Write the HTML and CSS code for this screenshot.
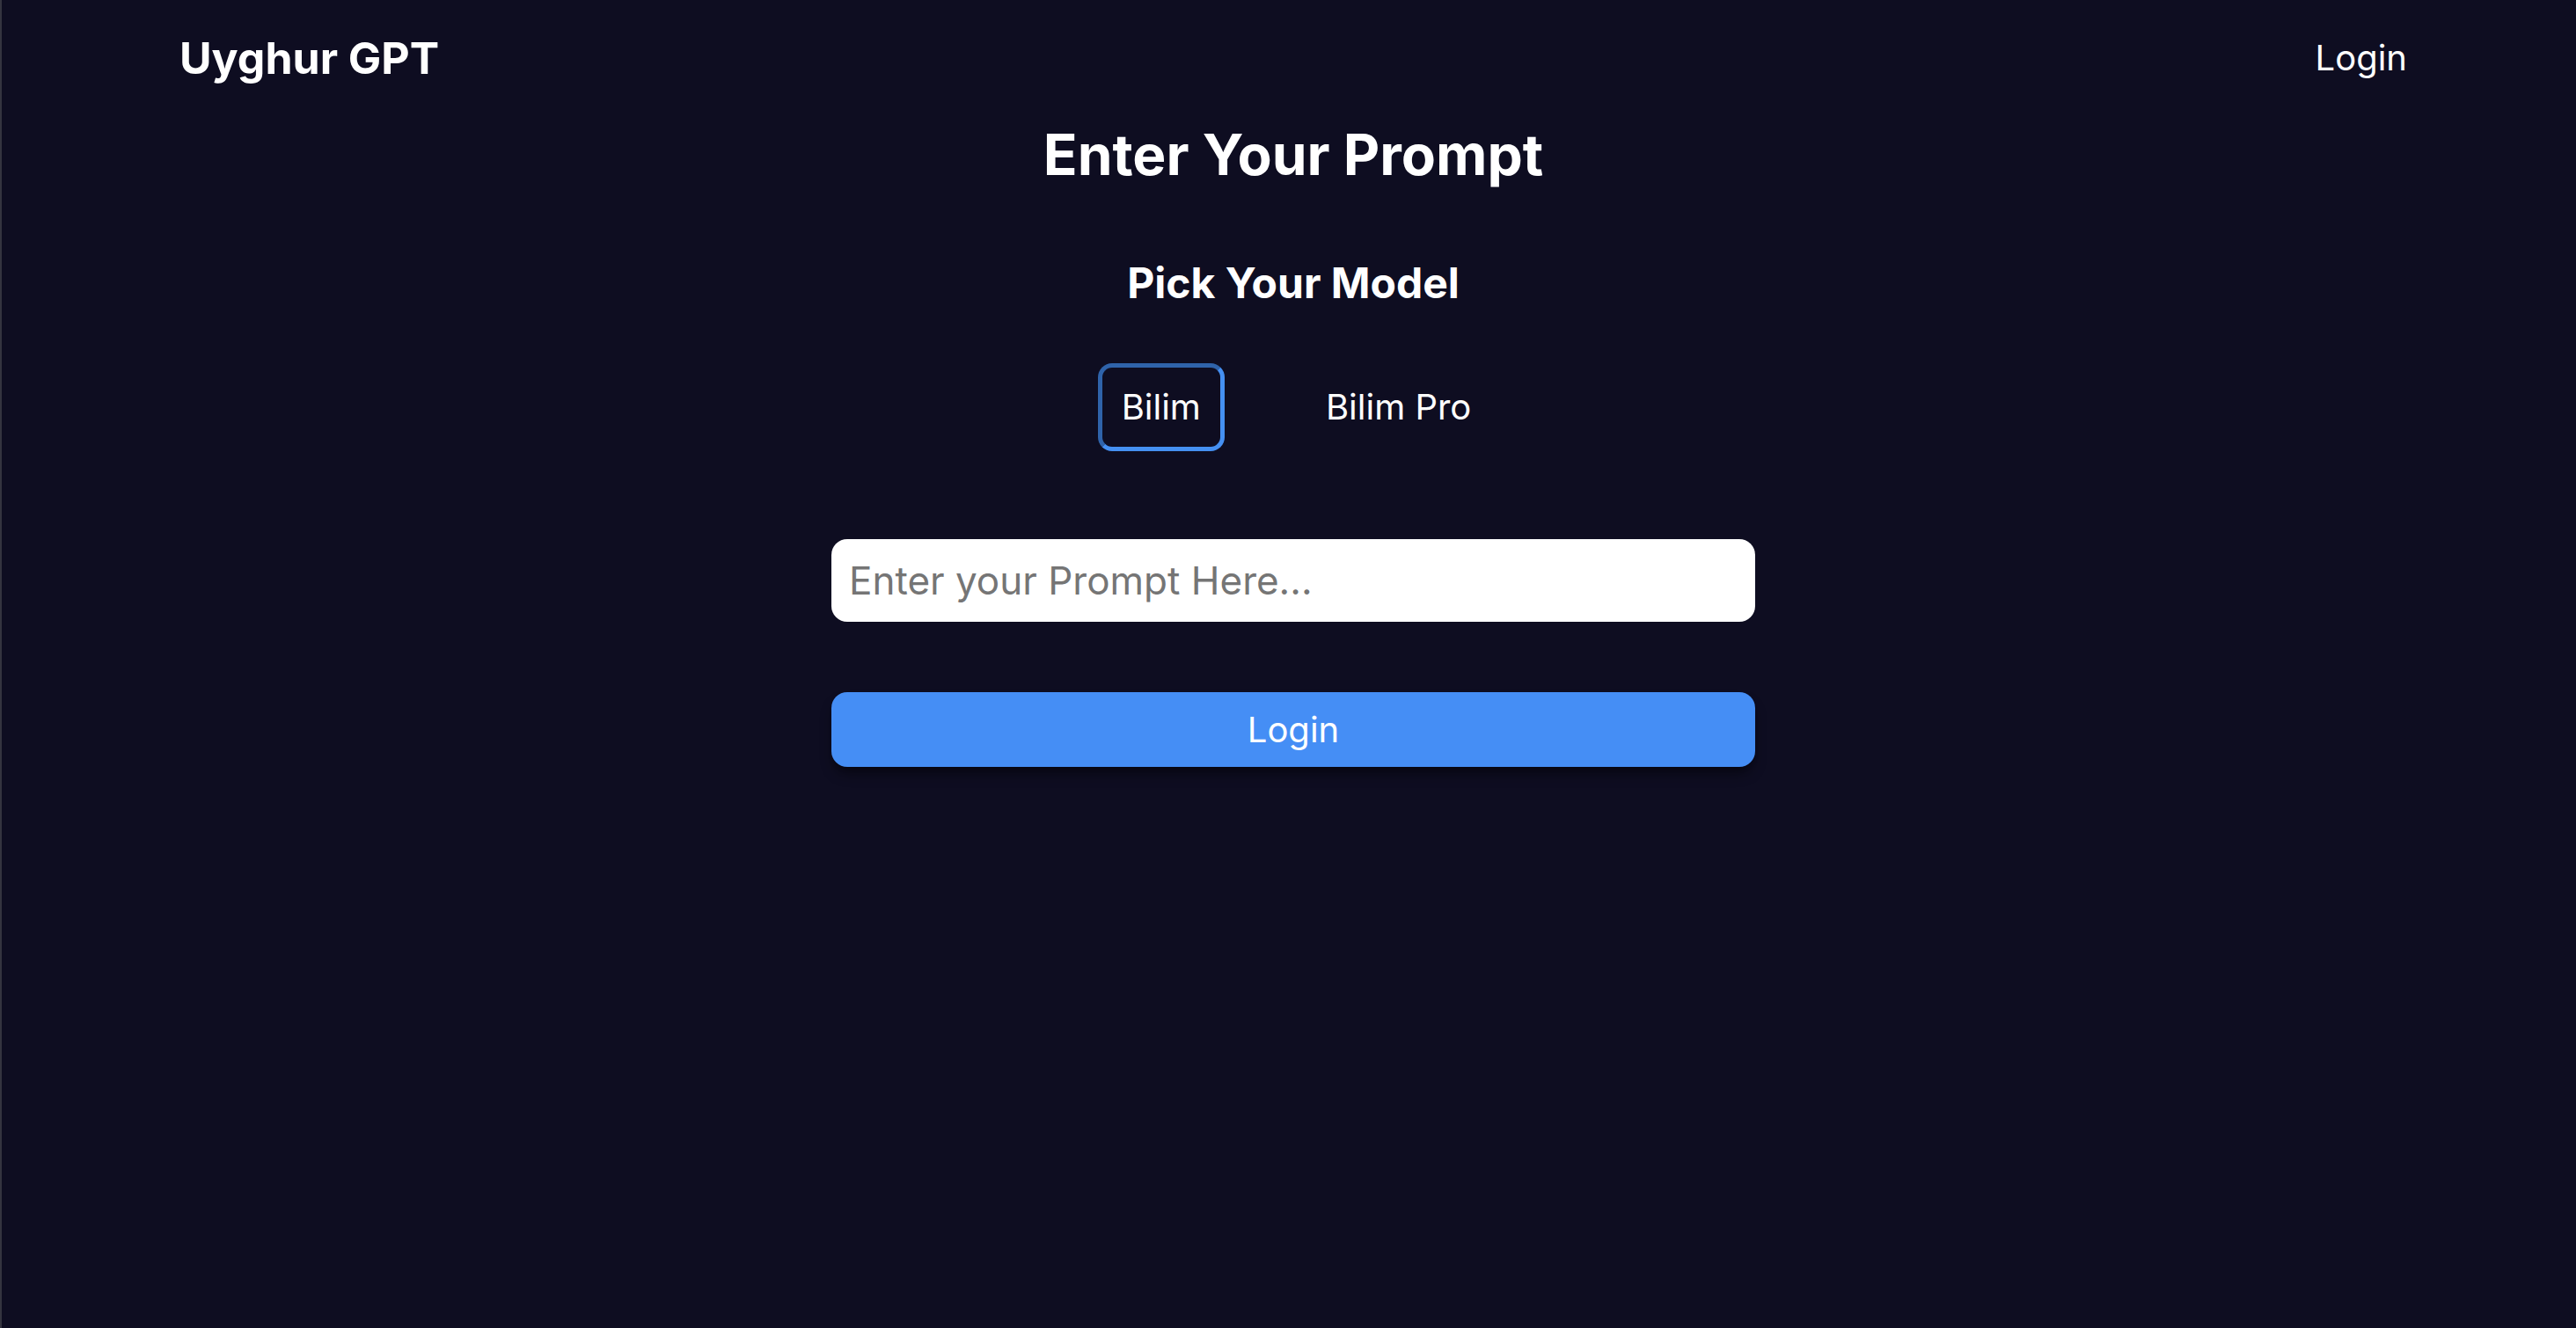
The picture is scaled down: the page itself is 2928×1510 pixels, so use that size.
FILE: index.html
```html
<!DOCTYPE html>
<html lang="en">
<head>
<meta charset="utf-8">
<title>Uyghur GPT</title>
<link rel="stylesheet" href="styles.css">
</head>
<body>
  <div class="page">
    <nav class="nav">
      <div class="brand">Uyghur GPT</div>
      <a class="nav-link" href="#">Login</a>
    </nav>
    <main class="main">
      <h1 class="title">Enter Your Prompt</h1>
      <h2 class="subtitle">Pick Your Model</h2>
      <div class="models">
        <button class="model model-active" type="button">Bilim</button>
        <button class="model" type="button">Bilim Pro</button>
      </div>
      <input class="prompt" type="text" placeholder="Enter your Prompt Here...">
      <button class="submit" type="button">Login</button>
    </main>
  </div>
</body>
</html>
```
FILE: styles.css
```css
* { box-sizing: border-box; }

html, body {
  margin: 0;
  height: 100%;
}

body {
  background: #0e0d21;
  border-left: 2px solid #34343f;
  padding-left: 10px;
  font-family: Inter, "Noto Sans", sans-serif;
  color: #ffffff;
}

.page {
  min-height: 100%;
}

.nav {
  display: flex;
  align-items: center;
  justify-content: space-between;
  padding: 36px 192px 0 192px;
}

.brand {
  font-size: 50px;
  font-weight: 700;
  line-height: 60px;
}

.nav-link {
  font-size: 40px;
  color: #ffffff;
  text-decoration: none;
  line-height: 48px;
}

.main {
  display: flex;
  flex-direction: column;
  align-items: center;
}

.title {
  margin: 41px 0 0;
  font-size: 64px;
  font-weight: 700;
  line-height: 78px;
}

.subtitle {
  margin: 78px 0 0;
  font-size: 48px;
  font-weight: 700;
  line-height: 58px;
}

.models {
  display: flex;
  gap: 88px;
  margin-top: 62px;
  margin-left: 7px;
}

.model {
  font-family: Inter, "Noto Sans", sans-serif;
  font-size: 40px;
  line-height: 48px;
  color: #ffffff;
  background: transparent;
  border: 5px solid transparent;
  border-radius: 16px;
  padding: 21px 22px;
  cursor: pointer;
}

.model-active {
  border-color: #2f63aa #4590f2 #4590f2 #2f63aa;
}

.prompt {
  margin-top: 100px;
  width: 1050px;
  height: 94px;
  border: none;
  border-radius: 18px;
  background: #ffffff;
  padding: 0 20px;
  font-family: Inter, "Noto Sans", sans-serif;
  font-size: 44px;
  color: #111111;
  outline: none;
}

.prompt::placeholder {
  color: #757575;
}

.submit {
  margin-top: 80px;
  width: 1050px;
  height: 85px;
  border: none;
  border-radius: 18px;
  background: #458ef5;
  color: #ffffff;
  font-family: Inter, "Noto Sans", sans-serif;
  font-size: 40px;
  box-shadow: 0 10px 15px -3px rgba(0, 0, 0, 0.45), 0 4px 6px -4px rgba(0, 0, 0, 0.4);
  cursor: pointer;
}
```
